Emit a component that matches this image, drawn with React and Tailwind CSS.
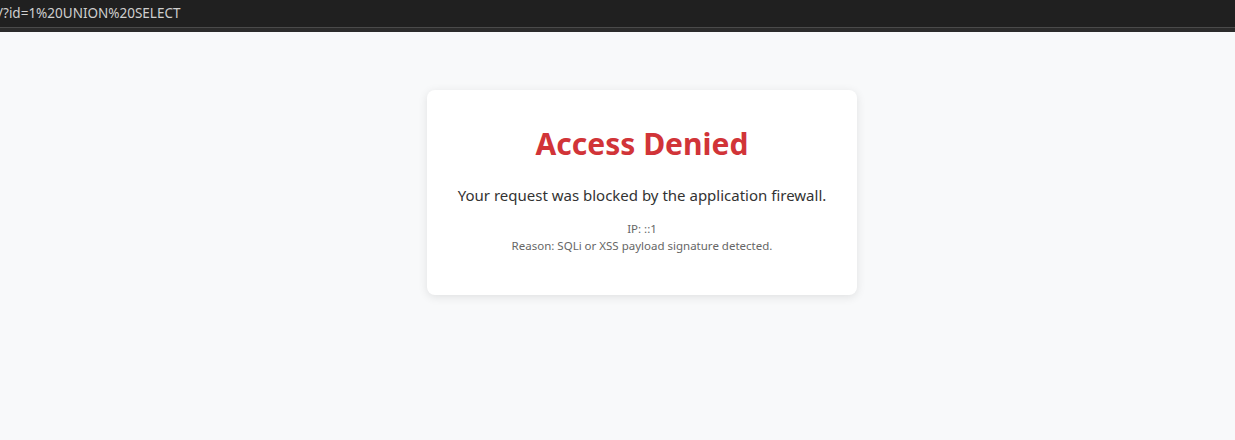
export default function App() {
  return (
    <div className="w-[1235px] h-[440px] flex flex-col bg-[#f8f9fa] overflow-hidden" style={{ fontFamily: '"Noto Sans", sans-serif' }}>
      <div className="h-[27px] bg-[#202020] flex items-center text-[13.5px] text-[#cfcfcf] leading-none">
        <span className="-ml-[2px]">/?id=1%20UNION%20SELECT</span>
      </div>
      <div className="h-[1px] bg-[#4a4a4a]" />
      <div className="h-[4px] bg-[#2b2b2b]" />
      <div className="flex justify-center pt-[58px] pl-[49px]">
        <div className="w-[430px] h-[205px] bg-white rounded-[8px] shadow-[0_2px_10px_rgba(0,0,0,0.1)] flex flex-col items-center pt-[34px]">
          <h1 className="text-[30px] font-bold text-[#d13438] leading-[40px]">Access Denied</h1>
          <p className="mt-[20px] text-[15px] text-[#333333] leading-[22px]">Your request was blocked by the application firewall.</p>
          <div className="mt-[14px] text-[11.5px] text-[#666666] leading-[17px] text-center">
            <div>IP: ::1</div>
            <div>Reason: SQLi or XSS payload signature detected.</div>
          </div>
        </div>
      </div>
    </div>
  );
}
